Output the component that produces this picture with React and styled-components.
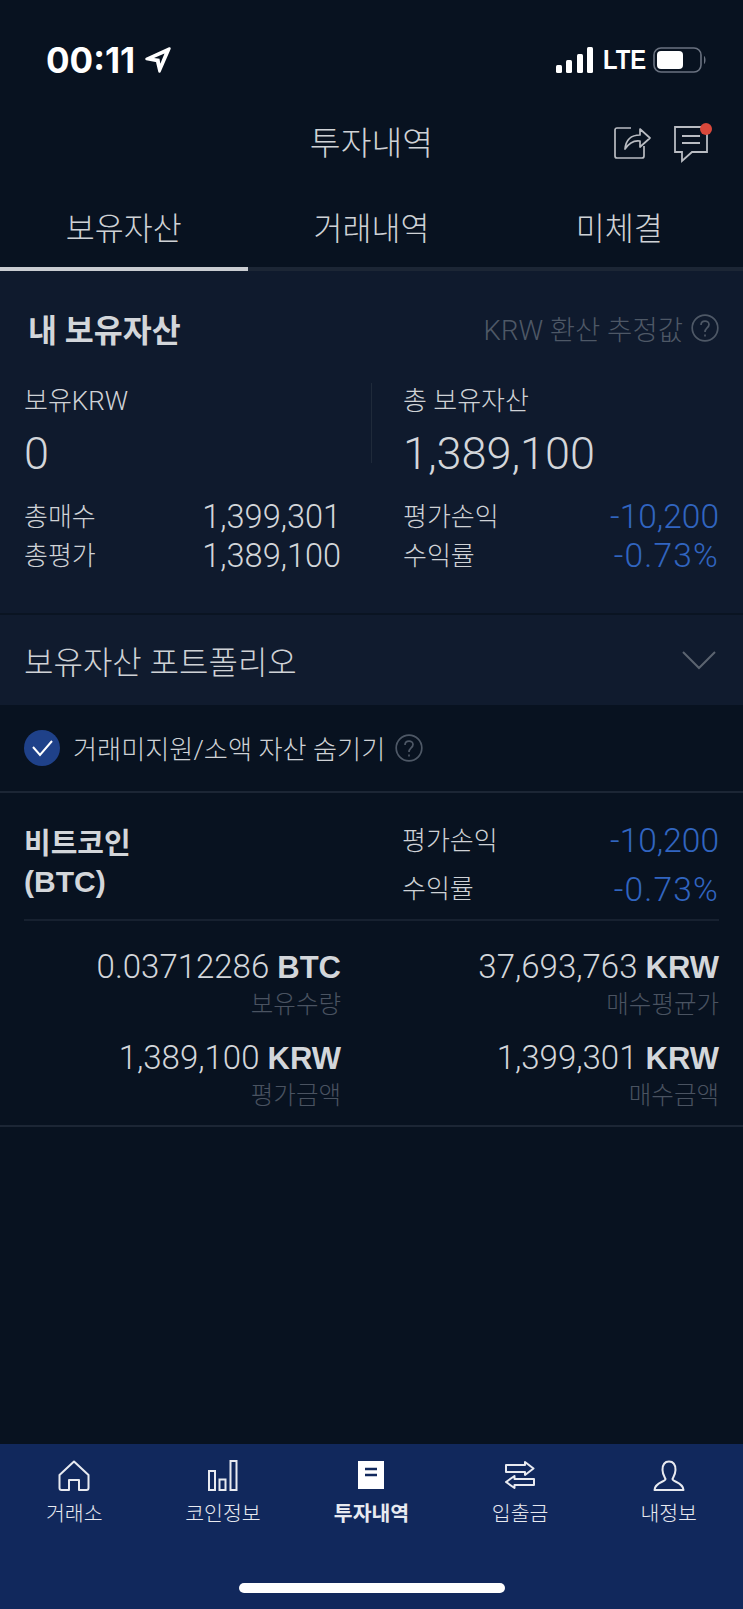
import React from 'react';
import styled, { createGlobalStyle } from 'styled-components';

//------------------------------------------------------------------------------
// STYLE:
//------------------------------------------------------------------------------
const GlobalStyle = createGlobalStyle`
  html, body {
    margin: 0;
    padding: 0;
    background: #081220;
  }
  * { box-sizing: border-box; }
`;

const Page = styled.div`
  width: 743px;
  height: 1609px;
  display: flex;
  flex-direction: column;
  overflow: hidden;
  background: #081220;
  color: #d3d6da;
  font-family: "Roboto", "Noto Sans CJK KR", sans-serif;
  font-weight: 300;
`;

const StatusBar = styled.div`
  height: 100px;
  padding: 20px 36px 0 46px;
  display: flex;
  align-items: center;
  justify-content: space-between;
  color: #fff;
`;

const StatusLeft = styled.div`
  display: flex;
  align-items: center;
  gap: 9px;
`;

const Time = styled.span`
  font-family: "Inter", sans-serif;
  font-size: 35px;
  font-weight: 700;
  letter-spacing: 0;
`;

const StatusRight = styled.div`
  display: flex;
  align-items: center;
  gap: 9px;
`;

const Lte = styled.span`
  font-family: "Liberation Sans", sans-serif;
  font-size: 28px;
  font-weight: 700;
  transform: scaleX(0.85);
  width: 41px;
  transform-origin: left center;
`;

const Header = styled.div`
  height: 80px;
  display: flex;
  align-items: center;
  justify-content: center;
  position: relative;
`;

const Title = styled.div`
  font-size: 33.5px;
  color: #cfd2d6;
`;

const HeaderIcons = styled.div`
  position: absolute;
  right: 30px;
  top: 22px;
  display: flex;
  gap: 21px;
`;

const Tabs = styled.div`
  display: grid;
  grid-template-columns: repeat(3, 1fr);
  height: 91px;
  padding-top: 5px;
`;

const Tab = styled.div`
  display: flex;
  align-items: center;
  justify-content: center;
  font-size: 31.5px;
  color: #cfd2d6;
  border-bottom: 4px solid ${p => (p.$active ? '#c9ccd1' : '#1c2635')};
`;

const Summary = styled.section`
  height: 344px;
  padding: 34px 24px 0;
  background: #0f1a2d;
  border-bottom: 2px solid #0a1422;
`;

const SummaryHead = styled.div`
  display: flex;
  align-items: center;
  justify-content: space-between;
  height: 46px;
  padding-left: 4px;
`;

const SummaryTitle = styled.h2`
  margin: 0;
  font-size: 31.5px;
  font-weight: 700;
  color: #d3d6da;
`;

const Hint = styled.div`
  display: flex;
  align-items: center;
  gap: 8px;
  font-size: 27.5px;
  color: #4e5866;
`;

const Columns = styled.div`
  display: grid;
  grid-template-columns: 317px 62px 1fr;
  margin-top: 32px;
`;

const Col = styled.div`
  display: flex;
  flex-direction: column;
`;

const Divider = styled.div`
  width: 1px;
  height: 80px;
  margin-left: 30px;
  background: #1f2a3a;
`;

const Label = styled.div`
  font-size: 26px;
  line-height: 36px;
  color: #cfd2d6;
`;

const BigValue = styled.div`
  font-family: "Roboto", sans-serif;
  font-size: 45px;
  line-height: 52px;
  margin-top: 9px;
  color: #d3d6da;
`;

const StatRow = styled.div`
  display: flex;
  align-items: center;
  justify-content: space-between;
  height: ${p => p.$h || 39}px;
`;

const Stats = styled.div`
  margin-top: 17px;
`;

const Num = styled.span`
  font-size: ${p => (p.$blue ? 33.5 : 32.5)}px;
  letter-spacing: ${p => (p.$pct ? 1.2 : 0)}px;
  color: ${p => (p.$blue ? '#3165c0' : '#d3d6da')};
`;

const Portfolio = styled.div`
  height: 90px;
  padding: 0 27px 0 24px;
  display: flex;
  align-items: center;
  justify-content: space-between;
  background: #101b2e;
  font-size: 32px;
  color: #cfd2d6;
`;

const HideRow = styled.div`
  height: 88px;
  display: flex;
  align-items: center;
  padding-left: 24px;
  border-bottom: 2px solid #1c2635;
`;

const Check = styled.span`
  width: 36px;
  height: 36px;
  border-radius: 50%;
  background: #1f4189;
  display: flex;
  align-items: center;
  justify-content: center;
  margin-right: 13px;
`;

const HideText = styled.span`
  font-size: 26.2px;
  color: #cfd2d6;
  margin-right: 10px;
`;

const Coin = styled.div`
  padding: 0 24px;
  border-bottom: 2px solid #1c2635;
  height: 334px;
`;

const CoinTop = styled.div`
  display: grid;
  grid-template-columns: 378px 1fr;
  height: 128px;
  padding-top: 24px;
  border-bottom: 2px solid #172130;
`;

const CoinName = styled.div`
  font-family: "Liberation Sans", "Noto Sans CJK KR", sans-serif;
  font-size: 29px;
  font-weight: 700;
  line-height: 37px;
  padding-top: 9px;
  color: #d3d6da;

  span {
    font-size: 30px;
  }
`;

const CoinGrid = styled.div`
  display: grid;
  grid-template-columns: 317px 1fr;
  column-gap: 61px;
  row-gap: 16px;
  padding-top: 27px;
`;

const Amount = styled.div`
  text-align: right;
`;

const AmountValue = styled.div`
  font-size: 33px;
  line-height: 38px;
  color: #d3d6da;

  b {
    font-family: "Liberation Sans", sans-serif;
    font-weight: 700;
    font-size: 31px;
  }
`;

const AmountLabel = styled.div`
  font-size: 24.5px;
  line-height: 36px;
  color: #4a5361;
`;

const Nav = styled.nav`
  margin-top: auto;
  height: 165px;
  background: #11285c;
  position: relative;
  display: grid;
  grid-template-columns: repeat(5, 1fr);
  align-items: start;
  padding-top: 16px;
`;

const NavItem = styled.div`
  display: flex;
  flex-direction: column;
  align-items: center;
  gap: 5px;
  color: #e8eaf0;
  font-size: 20.5px;
  font-weight: ${p => (p.$active ? 700 : 300)};
`;

const HomeBar = styled.div`
  position: absolute;
  left: 239px;
  bottom: 16px;
  width: 266px;
  height: 10px;
  border-radius: 5px;
  background: #fff;
`;

//------------------------------------------------------------------------------
// ICONS:
//------------------------------------------------------------------------------
const ArrowIcon = () => (
  <svg width="28" height="28" viewBox="0 0 28 28">
    <path d="M25.5 2.5 L2.5 13 L13 15 L15.5 25.5 Z" fill="#fff" stroke="#fff" strokeWidth="2.5" strokeLinejoin="round" />
    <path d="M20.5 7.5 L10 12 L15.5 12.8 L16.3 17.8 Z" fill="#081220" />
  </svg>
);

const SignalIcon = () => (
  <svg width="38" height="26" viewBox="0 0 38 26">
    <rect x="0" y="18" width="6" height="8" rx="1.5" fill="#fff" />
    <rect x="10" y="13" width="6" height="13" rx="1.5" fill="#fff" />
    <rect x="21" y="7" width="6" height="19" rx="1.5" fill="#fff" />
    <rect x="31" y="0" width="6" height="26" rx="1.5" fill="#fff" />
  </svg>
);

const BatteryIcon = () => (
  <svg width="54" height="26" viewBox="0 0 54 26">
    <rect x="1" y="1" width="47" height="24" rx="7" fill="none" stroke="#6a7280" strokeWidth="1.6" />
    <rect x="4" y="4" width="26" height="18" rx="4" fill="#fff" />
    <path d="M51 9 C53 10 53 16 51 17 Z" fill="#6a7280" />
  </svg>
);

const ShareIcon = () => (
  <svg width="38" height="38" viewBox="0 0 38 38" fill="none" stroke="#b9bcc2" strokeWidth="1.7">
    <path d="M17 6 H3 a2 2 0 0 0 -2 2 V34 a2 2 0 0 0 2 2 H28 a2 2 0 0 0 2 -2 V24" />
    <path d="M11 27 C12 17 18 13 26 13 V7 L36 16 L26 25 V19 C20 18 15 21 11 27 Z" strokeLinejoin="round" />
  </svg>
);

const ChatIcon = () => (
  <svg width="40" height="42" viewBox="0 0 40 42" fill="none">
    <path d="M31 5 H2 V30 H9 V39 L19 30 H34 V9" stroke="#b9bcc2" strokeWidth="1.8" />
    <path d="M9 14 H27 M9 21 H27" stroke="#b9bcc2" strokeWidth="1.8" />
    <circle cx="33" cy="7" r="6" fill="#d9483b" />
  </svg>
);

const QuestionIcon = ({ size, color }) => (
  <svg width={size} height={size} viewBox="0 0 28 28" fill="none" stroke={color} strokeWidth="1.7">
    <circle cx="14" cy="14" r="12.8" />
    <path d="M10 11 C10 5.8 18 5.8 18 10.5 C18 14 14 14 14 18" />
    <path d="M14 20.5 V22.5" />
  </svg>
);

const ChevronIcon = () => (
  <svg width="34" height="20" viewBox="0 0 34 20" fill="none" stroke="#5b6470" strokeWidth="2">
    <path d="M1 2 L17 18 L33 2" />
  </svg>
);

const CheckIcon = () => (
  <svg width="22" height="18" viewBox="0 0 22 18" fill="none" stroke="#fff" strokeWidth="2">
    <path d="M2 8 L9 16 L21 2" />
  </svg>
);

const HomeIcon = () => (
  <svg width="32" height="32" viewBox="0 0 32 32" fill="none" stroke="#e8eaf0" strokeWidth="2" strokeLinejoin="round">
    <path d="M16 1.5 L30.5 15 V28 Q30.5 30 28.5 30 H21 V20 H11 V30 H3.5 Q1.5 30 1.5 28 V15 Z" />
  </svg>
);

const ChartIcon = () => (
  <svg width="32" height="32" viewBox="0 0 32 32" fill="none" stroke="#e8eaf0" strokeWidth="2">
    <rect x="2" y="11" width="6" height="19" />
    <rect x="12.5" y="19.5" width="6" height="10.5" />
    <rect x="23.5" y="1" width="6" height="29" />
  </svg>
);

const DocIcon = () => (
  <svg width="32" height="32" viewBox="0 0 32 32">
    <rect x="3" y="1" width="26" height="28" fill="#fff" />
    <path d="M10 9 H22 M10 15 H22" stroke="#11285c" strokeWidth="2.4" />
  </svg>
);

const TransferIcon = () => (
  <svg width="32" height="32" viewBox="0 0 32 32" fill="none" stroke="#e8eaf0" strokeWidth="2" strokeLinejoin="round">
    <path d="M2 5 H21 V2 L29.5 8.5 L21 15 V12 H2 Z" />
    <path d="M30 19 H10.5 V16 L2 22 L10.5 28 V25 H30 Z" />
  </svg>
);

const PersonIcon = () => (
  <svg width="32" height="32" viewBox="0 0 32 32" fill="none" stroke="#e8eaf0" strokeWidth="2" strokeLinejoin="round">
    <path d="M16 1.5 C11 1.5 9.5 6 9.5 10 C9.5 14 11.5 17 12.5 19 C12.5 22 2 22 1.5 30 H30.5 C30 22 19.5 22 19.5 19 C20.5 17 22.5 14 22.5 10 C22.5 6 21 1.5 16 1.5 Z" />
  </svg>
);

//------------------------------------------------------------------------------
// DATA:
//------------------------------------------------------------------------------
const amounts = [
  { value: '0.03712286', unit: 'BTC', label: '보유수량' },
  { value: '37,693,763', unit: 'KRW', label: '매수평균가' },
  { value: '1,389,100', unit: 'KRW', label: '평가금액' },
  { value: '1,399,301', unit: 'KRW', label: '매수금액' },
];

const navItems = [
  { label: '거래소', icon: <HomeIcon /> },
  { label: '코인정보', icon: <ChartIcon /> },
  { label: '투자내역', icon: <DocIcon />, active: true },
  { label: '입출금', icon: <TransferIcon /> },
  { label: '내정보', icon: <PersonIcon /> },
];

//------------------------------------------------------------------------------
// COMPONENT:
//------------------------------------------------------------------------------
const App = () => (
  <Page>
    <GlobalStyle />
    <StatusBar>
      <StatusLeft>
        <Time>00:11</Time>
        <ArrowIcon />
      </StatusLeft>
      <StatusRight>
        <SignalIcon />
        <Lte>LTE</Lte>
        <BatteryIcon />
      </StatusRight>
    </StatusBar>

    <Header>
      <Title>투자내역</Title>
      <HeaderIcons>
        <ShareIcon />
        <ChatIcon />
      </HeaderIcons>
    </Header>

    <Tabs>
      <Tab $active>보유자산</Tab>
      <Tab>거래내역</Tab>
      <Tab>미체결</Tab>
    </Tabs>

    <Summary>
      <SummaryHead>
        <SummaryTitle>내 보유자산</SummaryTitle>
        <Hint>
          KRW 환산 추정값
          <QuestionIcon size={28} color="#4e5866" />
        </Hint>
      </SummaryHead>
      <Columns>
        <Col>
          <Label>보유KRW</Label>
          <BigValue>0</BigValue>
          <Stats>
            <StatRow><Label>총매수</Label><Num>1,399,301</Num></StatRow>
            <StatRow><Label>총평가</Label><Num>1,389,100</Num></StatRow>
          </Stats>
        </Col>
        <Divider />
        <Col>
          <Label>총 보유자산</Label>
          <BigValue>1,389,100</BigValue>
          <Stats>
            <StatRow><Label>평가손익</Label><Num $blue>-10,200</Num></StatRow>
            <StatRow><Label>수익률</Label><Num $blue $pct>-0.73%</Num></StatRow>
          </Stats>
        </Col>
      </Columns>
    </Summary>

    <Portfolio>
      보유자산 포트폴리오
      <ChevronIcon />
    </Portfolio>

    <HideRow>
      <Check><CheckIcon /></Check>
      <HideText>거래미지원/소액 자산 숨기기</HideText>
      <QuestionIcon size={28} color="#4e5866" />
    </HideRow>

    <Coin>
      <CoinTop>
        <CoinName>비트코인<br /><span>(BTC)</span></CoinName>
        <Col>
          <StatRow $h={47}><Label>평가손익</Label><Num $blue>-10,200</Num></StatRow>
          <StatRow $h={50}><Label>수익률</Label><Num $blue $pct>-0.73%</Num></StatRow>
        </Col>
      </CoinTop>
      <CoinGrid>
        {amounts.map(item => (
          <Amount key={item.label}>
            <AmountValue>{item.value} <b>{item.unit}</b></AmountValue>
            <AmountLabel>{item.label}</AmountLabel>
          </Amount>
        ))}
      </CoinGrid>
    </Coin>

    <Nav>
      {navItems.map(item => (
        <NavItem key={item.label} $active={item.active}>
          {item.icon}
          {item.label}
        </NavItem>
      ))}
      <HomeBar />
    </Nav>
  </Page>
);

export default App;
